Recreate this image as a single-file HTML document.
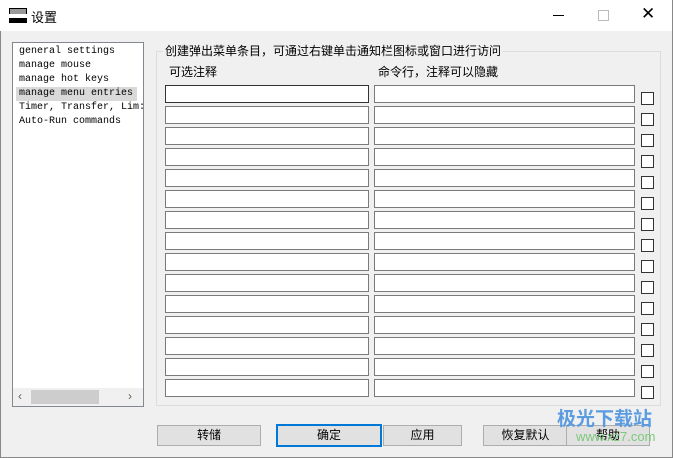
<html><head><style>
body{margin:0;width:673px;height:458px;background:#f0f0f0;font-family:"Liberation Sans","Noto Sans CJK SC",sans-serif;font-size:12px;position:relative;overflow:hidden}
.a{position:absolute}
.win{left:0;top:0;width:671px;height:456px;border:1px solid #888}
.tb{left:0;top:0;width:672px;height:31px;background:#fff}
.in{position:absolute;height:16px;background:#fff;border:1px solid #7a7a7a}
.cb{position:absolute;width:11px;height:11px;background:#fff;border:1px solid #333}
.btn{position:absolute;top:425px;height:19px;background:#e1e1e1;border:1px solid #adadad;text-align:center;line-height:19px;font-size:12px}
.li{font-family:"Liberation Mono",monospace;font-size:10px;height:14px;line-height:14px;padding-left:6px;white-space:nowrap}
</style></head><body>
<div class="a win"></div>
<div class="a tb"></div>
<div class="a" style="left:9px;top:8px;width:16px;height:5px;background:#999;border:1px solid #000;border-bottom:none"></div>
<div class="a" style="left:9px;top:14px;width:18px;height:3px;background:#fff"></div>
<div class="a" style="left:9px;top:18px;width:18px;height:5px;background:#000"></div>
<div class="a" style="left:31px;top:7px;font-size:13px">设置</div>
<div class="a" style="left:553px;top:15px;width:11px;height:1px;background:#000"></div>
<div class="a" style="left:598px;top:10px;width:9px;height:9px;border:1px solid #bbb"></div>
<div class="a" style="left:641px;top:4px;font-size:17px;color:#000">✕</div>
<div class="a" style="left:12px;top:42px;width:130px;height:363px;background:#fff;border:1px solid #828790;overflow:hidden">
<div style="height:2px"></div>
<div class="li">general settings</div>
<div class="li">manage mouse</div>
<div class="li">manage hot keys</div>
<div class="li" style="background:#d9d9d9;margin-left:3px;width:118px;padding-left:3px">manage menu entries</div>
<div class="li">Timer, Transfer, Lim:</div>
<div class="li">Auto-Run commands</div>
<div class="a" style="left:0;top:345px;width:130px;height:18px;background:#f0f0f0"></div>
<div class="a" style="left:18px;top:347px;width:68px;height:14px;background:#cdcdcd"></div>
<div class="a" style="left:5px;top:346px;color:#606060">‹</div>
<div class="a" style="left:115px;top:346px;color:#606060">›</div>
</div>
<div class="a" style="left:156px;top:51px;width:503px;height:353px;border:1px solid #dcdcdc"></div>
<div class="a" style="left:163px;top:42px;background:#f0f0f0;padding:0 2px">创建弹出菜单条目，可通过右键单击通知栏图标或窗口进行访问</div>
<div class="a" style="left:169px;top:63px">可选注释</div>
<div class="a" style="left:378px;top:63px">命令行，注释可以隐藏</div>
<div id="rows"></div>
<script>
var h='';for(var i=0;i<15;i++){var y=85+i*21;
h+='<div class="in" style="left:165px;top:'+y+'px;width:202px;'+(i==0?'border-color:#333':'')+'"></div>';
h+='<div class="in" style="left:374px;top:'+y+'px;width:259px"></div>';
h+='<div class="cb" style="left:641px;top:'+(y+7)+'px"></div>';}
document.getElementById('rows').innerHTML=h;
</script>
<div class="btn" style="left:157px;width:102px">转储</div>
<div class="btn" style="left:276px;width:102px;border:2px solid #0078d7;top:424px">确定</div>
<div class="btn" style="left:383px;width:77px">应用</div>
<div class="btn" style="left:483px;width:83px">恢复默认</div>
<div class="btn" style="left:566px;width:82px">帮助</div>
<div class="a" style="left:557px;top:404px;font-size:19px;font-weight:bold;color:#5b9be0">极光下载站</div>
<div class="a" style="left:576px;top:429px;font-size:13px;color:#7cc87c">www.xz7.com</div>
</body></html>
